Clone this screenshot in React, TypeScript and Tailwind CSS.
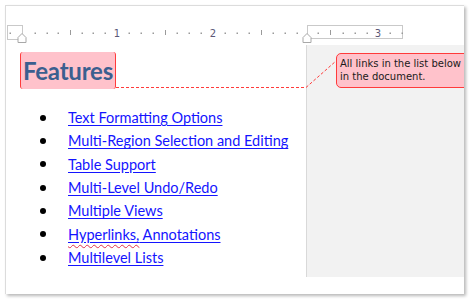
import React from 'react';

const items = [
  'Text Formatting Options',
  'Multi-Region Selection and Editing',
  'Table Support',
  'Multi-Level Undo/Redo',
  'Multiple Views',
  'Hyperlinks, Annotations',
  'Multilevel Lists',
];

const dots = [10, 35, 47, 58, 82, 93, 105, 129, 141, 153, 177, 189, 201, 225, 237, 249, 273, 285, 297, 318, 343, 355, 367, 390, 402];
const ticks = [70, 165, 261, 330];
const numbers: [number, string][] = [[117, '1'], [213, '2'], [378, '3']];

const Ruler = () => (
  <svg width="458" height="39" className="block">
    <g transform="translate(-6,-6)">
      <rect x="7.5" y="25.5" width="15" height="14" fill="#fff" stroke="#c9c9c9" />
      <rect x="307.5" y="25.5" width="95" height="13" fill="#fff" stroke="#c9c9c9" />
      {dots.map((x) => (
        <rect key={x} x={x - 0.5} y="32.5" width="1.5" height="1.5" fill="#9a9a9a" />
      ))}
      {ticks.map((x) => (
        <rect key={x} x={x} y="30" width="1" height="5" fill="#9a9a9a" />
      ))}
      {numbers.map(([x, n]) => (
        <text key={n} x={x} y="37" fontSize="10" textAnchor="middle" fill="#5b5877" fontFamily="'DejaVu Sans', sans-serif">
          {n}
        </text>
      ))}
      <polygon points="22,33.5 26,37.5 26,42.5 18,42.5 18,37.5" fill="#fff" stroke="#a8a8a8" />
      <polygon points="307,33.5 311,37.5 311,42.5 303,42.5 303,37.5" fill="#fff" stroke="#a8a8a8" />
    </g>
  </svg>
);

export default function App() {
  return (
    <div className="w-[470px] h-[300px] bg-white pt-[5px] pl-[5px] overflow-hidden">
      <div className="relative w-[459px] h-[289px] bg-white border-l border-t border-[#dcdcdc] shadow-[2px_2px_3px_rgba(0,0,0,0.28)]">
        <Ruler />
        <div className="relative flex h-[232px]">
          {/* document column */}
          <div className="w-[300px] pl-[14px] pt-[7px]">
            <div className="w-[96px] h-[37px] flex items-center justify-center bg-[#ffc2cb] border-x border-[#ff3b3b] rounded-[3px]">
              <span className="font-['Lato',sans-serif] font-bold text-[24px] text-[#3b5f8f] leading-none tracking-[-0.2px]">
                Features
              </span>
            </div>
            <ul className="mt-[17px] font-['Lato',sans-serif] text-[14.5px] leading-[23.33px]">
              {items.map((t) => (
                <li key={t} className="flex items-center">
                  <span className="w-[6px] h-[6px] rounded-full bg-black ml-[20px]" />
                  <a href="#" className="ml-[22px] text-[#1414ff] underline underline-offset-[2px] decoration-[#1414ff]">
                    {t.startsWith('Hyperlinks') ? (
                      <>
                        <span className="underline decoration-wavy decoration-[#e0304a] underline-offset-[4px] decoration-1">Hyperlinks,</span>
                        {' Annotations'}
                      </>
                    ) : (
                      t
                    )}
                  </a>
                </li>
              ))}
            </ul>
          </div>
          {/* comments pane */}
          <div className="w-[158px] bg-[#f2f2f2] border-l border-[#d9d9d9] overflow-hidden pt-[8px] pl-[29px]">
            <div className="w-[140px] h-[35px] bg-[#ffc2cb] border border-[#ff3b3b] rounded-[5px] pl-[3px] pt-[3px] font-['DejaVu_Sans',sans-serif] text-[10px] leading-[13px] text-[#1a1a1a] whitespace-nowrap">
              <div>All links in the list below</div>
              <div>in the document.</div>
            </div>
          </div>
          <svg className="absolute left-0 top-0 pointer-events-none" width="458" height="60">
            <path d="M110 42.5 H300 L330 16" fill="none" stroke="#ff3b3b" strokeWidth="1" strokeDasharray="3 2" />
          </svg>
        </div>
      </div>
    </div>
  );
}
